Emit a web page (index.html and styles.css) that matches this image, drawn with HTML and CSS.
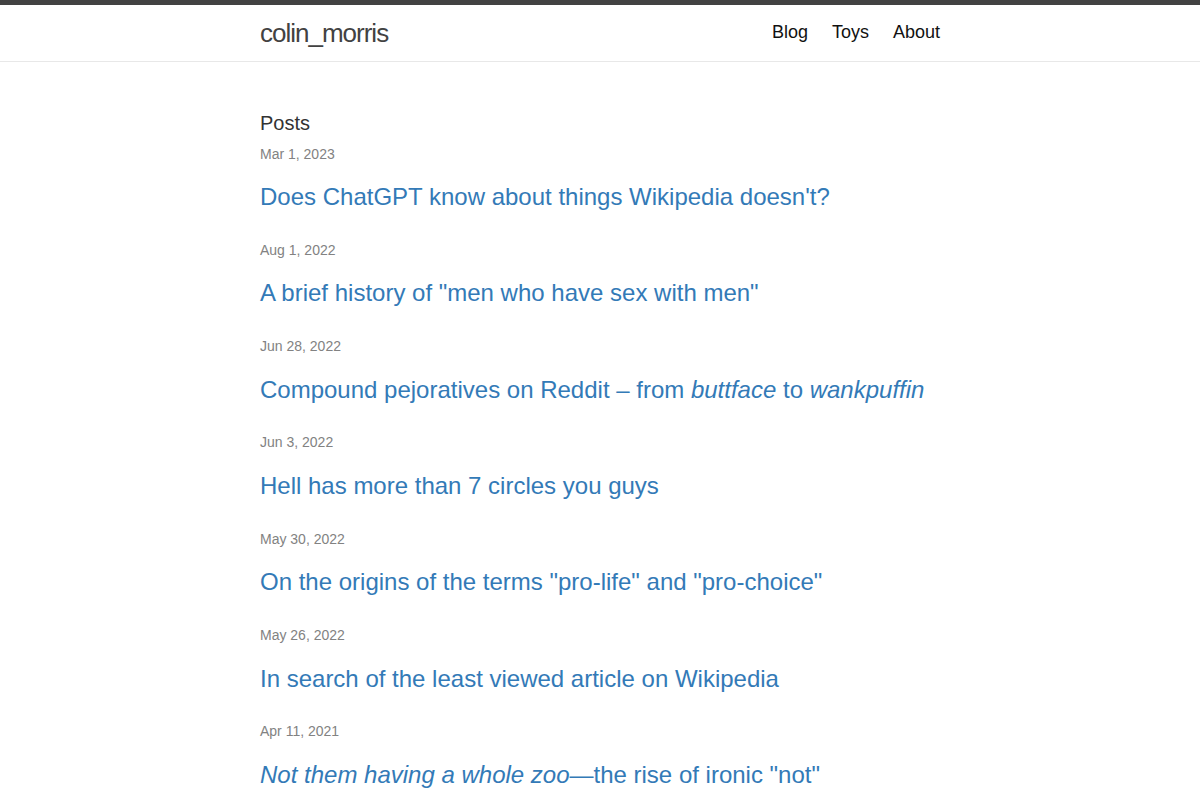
FILE: index.html
```html
<!DOCTYPE html>
<html lang="en">
<head>
<meta charset="utf-8">
<title>colin_morris</title>
<link rel="stylesheet" href="styles.css">
</head>
<body>
<header class="site-header">
  <div class="wrapper header-inner">
    <a class="site-title" href="#">colin_morris</a>
    <nav class="site-nav">
      <a class="page-link" href="#">Blog</a>
      <a class="page-link" href="#">Toys</a>
      <a class="page-link" href="#">About</a>
    </nav>
  </div>
</header>
<main class="page-content">
  <div class="wrapper">
    <h2 class="post-list-heading">Posts</h2>
    <ul class="post-list">
      <li>
        <span class="post-meta">Mar 1, 2023</span>
        <h3 class="post-title"><a class="post-link" href="#">Does ChatGPT know about things Wikipedia doesn't?</a></h3>
      </li>
      <li>
        <span class="post-meta">Aug 1, 2022</span>
        <h3 class="post-title"><a class="post-link" href="#">A brief history of "men who have sex with men"</a></h3>
      </li>
      <li>
        <span class="post-meta">Jun 28, 2022</span>
        <h3 class="post-title"><a class="post-link" href="#">Compound pejoratives on Reddit – from <em>buttface</em> to <em>wankpuffin</em></a></h3>
      </li>
      <li>
        <span class="post-meta">Jun 3, 2022</span>
        <h3 class="post-title"><a class="post-link" href="#">Hell has more than 7 circles you guys</a></h3>
      </li>
      <li>
        <span class="post-meta">May 30, 2022</span>
        <h3 class="post-title"><a class="post-link" href="#">On the origins of the terms "pro-life" and "pro-choice"</a></h3>
      </li>
      <li>
        <span class="post-meta">May 26, 2022</span>
        <h3 class="post-title"><a class="post-link" href="#">In search of the least viewed article on Wikipedia</a></h3>
      </li>
      <li>
        <span class="post-meta">Apr 11, 2021</span>
        <h3 class="post-title"><a class="post-link" href="#"><em>Not them having a whole zoo</em>—the rise of ironic "not"</a></h3>
      </li>
    </ul>
  </div>
</main>
</body>
</html>
```

FILE: styles.css
```css
* { box-sizing: border-box; }

html, body {
  margin: 0;
  padding: 0;
}

body {
  font-family: "Liberation Sans", Arial, Helvetica, sans-serif;
  font-size: 16px;
  line-height: 1.5;
  color: #111;
  background: #fff;
}

.wrapper {
  max-width: 680px;
  margin: 0 auto;
}

.site-header {
  border-top: 5px solid #424242;
  border-bottom: 1px solid #e8e8e8;
  min-height: 62px;
}

.header-inner {
  display: flex;
  justify-content: space-between;
  align-items: center;
  height: 56px;
}

.site-title {
  font-size: 26px;
  font-weight: 300;
  line-height: 56px;
  letter-spacing: -1px;
  color: #424242;
  text-decoration: none;
}

.site-nav {
  display: flex;
  gap: 24px;
  margin-top: -1px;
}

.page-link {
  font-size: 18px;
  line-height: 27px;
  color: #111;
  text-decoration: none;
}

.page-content {
  padding-top: 46px;
}

.post-list-heading {
  font-size: 20px;
  font-weight: 400;
  line-height: 30px;
  margin: 0 0 5.5px;
  color: #333;
}

.post-list {
  list-style: none;
  margin: 0;
  padding: 0;
}

.post-list li {
  margin-bottom: 24.83px;
}

.post-meta {
  display: block;
  font-size: 14px;
  line-height: 21px;
  color: #828282;
}

.post-title {
  margin: 14.5px 0 0;
  font-size: 24px;
  font-weight: 400;
  line-height: 36px;
}

.post-link {
  color: #337ab7;
  text-decoration: none;
}
```
